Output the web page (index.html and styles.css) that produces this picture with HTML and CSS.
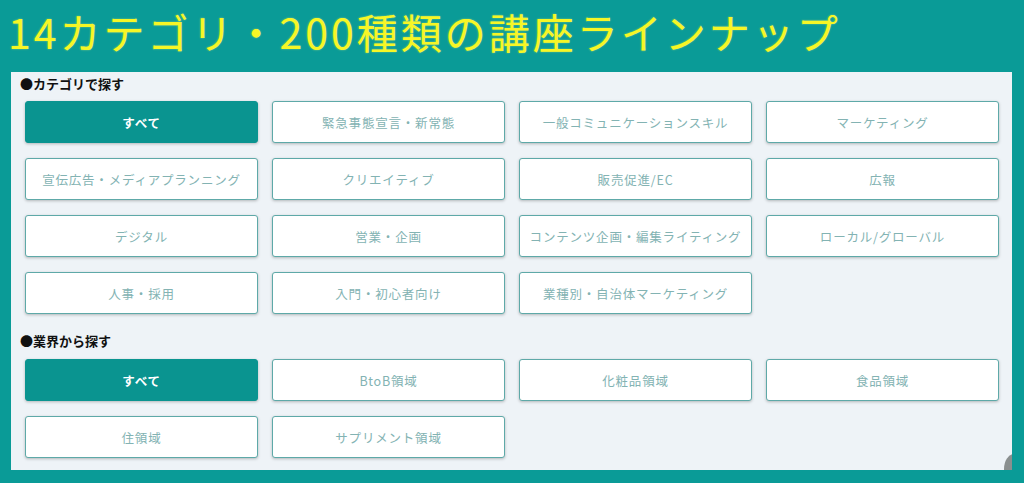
FILE: index.html
```html
<!DOCTYPE html>
<html lang="ja">

<head>
  <meta charset="UTF-8">
  <meta name="viewport" content="width=device-width, initial-scale=1.0">
  <title>講座ラインナップ</title>
  <link rel="stylesheet" href="styles.css">
</head>

<body>
  <header id="title-bar">
    <h1>14カテゴリ・200種類の講座ラインナップ</h1>
  </header>
  <main id="panel">
    <h2>●カテゴリで探す</h2>
    <div class="tag-grid">
      <a class="tag active">すべて</a>
      <a class="tag">緊急事態宣言・新常態</a>
      <a class="tag">一般コミュニケーションスキル</a>
      <a class="tag">マーケティング</a>
      <a class="tag">宣伝広告・メディアプランニング</a>
      <a class="tag">クリエイティブ</a>
      <a class="tag">販売促進/EC</a>
      <a class="tag">広報</a>
      <a class="tag">デジタル</a>
      <a class="tag">営業・企画</a>
      <a class="tag">コンテンツ企画・編集ライティング</a>
      <a class="tag">ローカル/グローバル</a>
      <a class="tag">人事・採用</a>
      <a class="tag">入門・初心者向け</a>
      <a class="tag">業種別・自治体マーケティング</a>
    </div>
    <h2 class="second">●業界から探す</h2>
    <div class="tag-grid">
      <a class="tag active">すべて</a>
      <a class="tag">BtoB領域</a>
      <a class="tag">化粧品領域</a>
      <a class="tag">食品領域</a>
      <a class="tag">住領域</a>
      <a class="tag">サプリメント領域</a>
    </div>
    <span id="to-top"></span>
  </main>
</body>

</html>
```

FILE: styles.css
```css
* {
  margin: 0;
  padding: 0;
  box-sizing: border-box;
  text-decoration: none;
  font-family: 'Noto Sans CJK JP', 'Noto Sans', sans-serif;
}

body {
  background-color: #0a9b97;
  width: 1024px;
  height: 483px;
  overflow: hidden;
}

#title-bar {
  height: 72px;
  padding-left: 8px;
}

#title-bar h1 {
  font-size: 41px;
  font-weight: 400;
  line-height: 62px;
  letter-spacing: 3px;
  color: #f6f626;
  text-shadow: 0 0 2px rgba(255, 255, 120, 0.5);
}

#panel {
  position: relative;
  overflow: hidden;
  width: 1001px;
  margin-left: 11px;
  padding: 2px 14px 12px 14px;
  background-color: #eef3f7;
}

h2 {
  font-size: 13px;
  font-weight: 700;
  line-height: 20px;
  color: #111;
  margin-left: -5px;
  margin-bottom: 7px;
}

h2.second {
  margin-top: 17px;
  margin-bottom: 8px;
}

.tag-grid {
  display: grid;
  grid-template-columns: repeat(4, 233px);
  column-gap: 14px;
  row-gap: 15px;
}

.tag {
  display: flex;
  align-items: center;
  justify-content: center;
  height: 42px;
  background-color: #fff;
  border: 1.5px solid #5ea9a8;
  border-radius: 3px;
  box-shadow: 0 1px 3px rgba(0, 0, 0, 0.25);
  color: #83b3b3;
  font-size: 12.5px;
  letter-spacing: .8px;
  cursor: pointer;
}

.tag.active {
  background-color: #0a9490;
  border-color: #0a9490;
  color: #fff;
  font-weight: 700;
}

#to-top {
  position: absolute;
  right: -12px;
  bottom: -14px;
  width: 20px;
  height: 30px;
  border-radius: 50%;
  background-color: #8a8f8f;
}
```
